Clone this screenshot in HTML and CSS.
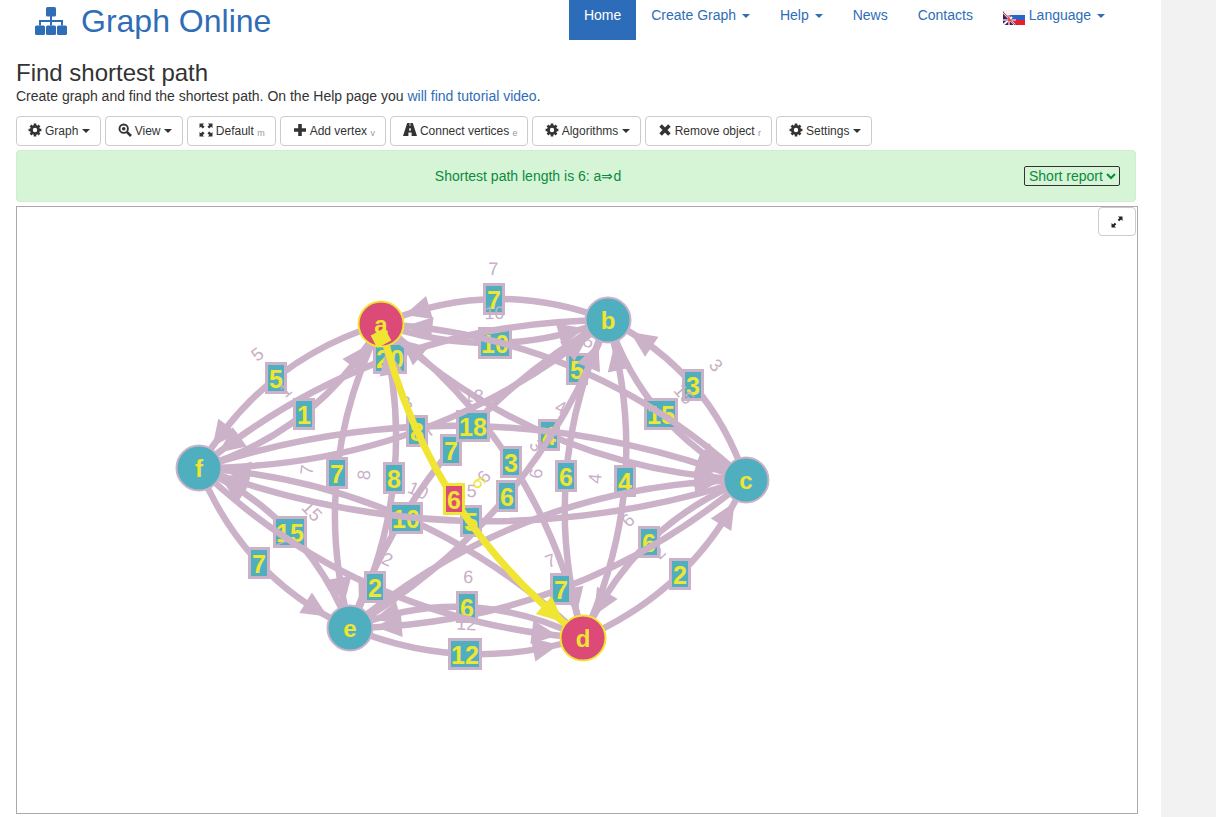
FILE: index.html
```html
<!DOCTYPE html>
<html lang="en">
<head>
<meta charset="utf-8">
<title>Find shortest path - Graph Online</title>
<link rel="stylesheet" href="styles.css">
</head>
<body>
<svg class="defs" width="0" height="0" aria-hidden="true">
  <symbol id="i-cog" viewBox="0 0 14 14">
    <circle cx="7" cy="7" r="3.6" fill="none" stroke="currentColor" stroke-width="2.8"/>
    <path d="M7 .6V3M7 11v2.4M.6 7H3M11 7h2.4M2.5 2.5l1.7 1.7M9.8 9.8l1.7 1.7M11.5 2.5L9.8 4.2M4.2 9.8l-1.7 1.7" stroke="currentColor" stroke-width="2.6" fill="none"/>
  </symbol>
  <symbol id="i-zoom" viewBox="0 0 14 14">
    <circle cx="5.7" cy="5.7" r="4.2" fill="none" stroke="currentColor" stroke-width="1.9"/>
    <circle cx="5.7" cy="5.7" r="1.8" fill="currentColor"/>
    <path d="M8.8 8.8l4.2 4.2" stroke="currentColor" stroke-width="2.6" fill="none"/>
  </symbol>
  <symbol id="i-full" viewBox="0 0 14 14">
    <g fill="currentColor">
      <path d="M.5 .5h4.6L3.7 1.9l1.9 1.9-1.8 1.8-1.9-1.9L.5 5.1z"/>
      <path d="M13.5 .5H8.9l1.4 1.4-1.9 1.9 1.8 1.8 1.9-1.9 1.4 1.4z"/>
      <path d="M.5 13.5h4.6l-1.4-1.4 1.9-1.9-1.8-1.8-1.9 1.9L.5 8.9z"/>
      <path d="M13.5 13.5H8.9l1.4-1.4-1.9-1.9 1.8-1.8 1.9 1.9 1.4-1.4z"/>
    </g>
  </symbol>
  <symbol id="i-plus" viewBox="0 0 14 14">
    <path d="M5.2 1h3.6v4.2H13v3.6H8.8V13H5.2V8.8H1V5.2h4.2z" fill="currentColor"/>
  </symbol>
  <symbol id="i-road" viewBox="0 0 14 14">
    <path d="M4.2 0h2.4v3h.8V0h2.4L14 13H8.6V9.4H5.4V13H0zM6.2 5.2v2.6h1.6V5.2z" fill="currentColor" fill-rule="evenodd"/>
  </symbol>
  <symbol id="i-x" viewBox="0 0 14 14">
    <path d="M2.6 2.6l8.8 8.8M11.4 2.6l-8.8 8.8" stroke="currentColor" stroke-width="3.6" fill="none"/>
  </symbol>
</svg>
<div class="page">
  <header class="navbar">
    <a class="brand" href="#">
      <svg class="brand-icon" viewBox="0 0 32 28" aria-hidden="true">
        <rect x="11" y="0" width="10" height="9.5" rx="1.5"/>
        <rect x="0" y="18.5" width="10" height="9.5" rx="1.5"/>
        <rect x="11" y="18.5" width="10" height="9.5" rx="1.5"/>
        <rect x="22" y="18.5" width="10" height="9.5" rx="1.5"/>
        <path class="brand-lines" d="M16 9v9.5M5 18.5v-4.5h22v4.5"/>
      </svg>
      <span>Graph Online</span>
    </a>
    <nav class="nav">
      <a class="nav-item active" href="#">Home</a>
      <a class="nav-item" href="#">Create Graph <i class="caret"></i></a>
      <a class="nav-item" href="#">Help <i class="caret"></i></a>
      <a class="nav-item" href="#">News</a>
      <a class="nav-item" href="#">Contacts</a>
      <a class="nav-item" href="#"><svg class="flag" viewBox="0 0 22 15" aria-hidden="true">
          <rect width="22" height="5" fill="#f4f4f8"/>
          <rect y="5" width="22" height="5" fill="#2a62c8"/>
          <rect y="10" width="22" height="5" fill="#e8202a"/>
          <path d="M0 1l14 14H0z" fill="#1f2a70"/>
          <path d="M0 2l12 13M0 15l9-8M6 5v10M0 10h13" stroke="#fff" stroke-width="2" fill="none"/>
          <path d="M0 2l12 13M6 5v10M0 10h13" stroke="#d8202c" stroke-width="1" fill="none"/>
        </svg> Language <i class="caret"></i></a>
    </nav>
  </header>

  <main class="content">
    <h1 class="title">Find shortest path</h1>
    <p class="subtitle">Create graph and find the shortest path. On the Help page you <a href="#">will find tutorial video</a>.</p>

    <div class="toolbar">
      <button class="btn tight"><svg class="ico"><use href="#i-cog"/></svg>Graph <i class="caret dark"></i></button>
      <button class="btn"><svg class="ico"><use href="#i-zoom"/></svg>View <i class="caret dark"></i></button>
      <button class="btn tight"><svg class="ico"><use href="#i-full"/></svg>Default <small class="hint">m</small></button>
      <button class="btn"><svg class="ico"><use href="#i-plus"/></svg>Add vertex <small class="hint">v</small></button>
      <button class="btn narrow"><svg class="ico"><use href="#i-road"/></svg>Connect vertices <small class="hint">e</small></button>
      <button class="btn"><svg class="ico"><use href="#i-cog"/></svg>Algorithms <i class="caret dark"></i></button>
      <button class="btn"><svg class="ico"><use href="#i-x"/></svg>Remove object <small class="hint">r</small></button>
      <button class="btn"><svg class="ico"><use href="#i-cog"/></svg>Settings <i class="caret dark"></i></button>
    </div>

    <div class="alert">
      <span class="alert-text">Shortest path length is 6: a⇒d</span>
      <select class="report"><option>Short report</option></select>
    </div>

    <div class="canvas">
      <svg id="graph" class="graph" viewBox="17 207 1120 606" aria-label="Graph"></svg>
      <button class="expand" aria-label="Fullscreen">
        <svg viewBox="0 0 12 12" aria-hidden="true"><path d="M7 .5h4.5V5L10 3.5 8.2 5.3 6.7 3.8 8.5 2zM5 11.5H.5V7L2 8.5l1.8-1.8 1.5 1.5L3.5 10z"/></svg>
      </button>
    </div>
  </main>
</div>
<script src="graph.js"></script>
</body>
</html>
```
FILE: styles.css
```css
* { box-sizing: border-box; }
html, body { margin: 0; height: 100%; overflow: hidden; }
body {
  background: #f2f2f2;
  font-family: "Liberation Sans", Arial, sans-serif;
  font-size: 14px;
  line-height: 20px;
  color: #333;
}
a { color: #2f6db7; text-decoration: none; }
.defs { position: absolute; }
.page { width: 1161px; height: 817px; background: #fff; }

.navbar { display: flex; height: 40px; }
.brand { display: flex; align-items: center; gap: 14px; padding-left: 35px; font-size: 32px; line-height: 40px; color: #2f6db7; height: 42px; }
.brand-icon { width: 32px; height: 28px; fill: #2f6db7; }
.brand-lines { fill: none; stroke: #2f6db7; stroke-width: 2; }
.nav { display: flex; margin-left: auto; margin-right: 41px; }
.nav-item { display: block; height: 40px; padding: 5px 15px 15px; color: #2f6db7; white-space: nowrap; }
.nav-item.active { background: #2d6cb8; color: #fff; }
.flag { width: 22px; height: 15px; vertical-align: -5px; }
.caret { display: inline-block; width: 0; height: 0; margin-left: 2px; vertical-align: middle; border-top: 4px solid currentColor; border-left: 4px solid transparent; border-right: 4px solid transparent; }

.content { padding: 0 25px 0 16px; }
.title { margin: 20px 0 0; font-size: 24px; font-weight: 400; line-height: 26px; color: #333; }
.subtitle { margin: 0; }

.toolbar { display: flex; gap: 4px; margin-top: 10px; }
.btn { display: inline-flex; align-items: center; height: 30px; padding: 0 10px 0 12px; background: #fff; border: 1px solid #ccc; border-radius: 4px; font: 12px/18px "Liberation Sans", Arial, sans-serif; color: #333; white-space: pre; }
.btn.narrow { padding-right: 9px; }
.btn.tight { padding-left: 11px; }
.ico { width: 14px; height: 14px; margin: -2px 3px 0 0; flex: none; color: #333; }
.caret.dark { margin: 0; }
.hint { font-size: 9px; color: #999; padding-top: 5px; line-height: 13px; }

.alert { display: flex; align-items: center; height: 52px; margin-top: 4px; padding: 0 15px; background: #d6f5d6; border: 1px solid #ccefcc; border-radius: 4px; color: #0c8a40; }
.alert-text { flex: 1; text-align: center; }
.report { width: 96px; height: 20px; padding: 0; background: transparent; border: 1px solid #333; border-radius: 2px; color: #0c8a40; font: 14px "Liberation Sans", Arial, sans-serif; }

.canvas { position: relative; width: 1122px; height: 608px; margin-top: 4px; border: 1px solid #aaa; background: #fff; }
.graph { display: block; width: 1120px; height: 606px; }
.expand { position: absolute; top: 0; right: 1px; width: 38px; height: 29px; padding: 0; display: flex; align-items: center; justify-content: center; background: #fff; border: 1px solid #ccc; border-radius: 4px; }
.expand svg { width: 12px; height: 12px; fill: #222; }

.edge { fill: none; stroke: #ccb2c8; stroke-width: 6.5; }
.head { fill: #ccb2c8; }
.edge.hot { stroke: #f0e532; stroke-width: 7; }
.head.hot { fill: #f0e532; }
.weight { font: 18px "Liberation Sans", Arial, sans-serif; fill: #c9aec6; text-anchor: middle; dominant-baseline: central; }
.weight.hot { fill: #f0e532; }
.box { fill: #4fafbf; stroke: #ccb2c8; stroke-width: 3; }
.box.hot { fill: #dc4b77; stroke: #f0e532; }
.num { font: bold 25px "Liberation Sans", Arial, sans-serif; fill: #f0e532; text-anchor: middle; dominant-baseline: central; }
.vertex { fill: #4fafbf; stroke: #ccb2c8; stroke-width: 2; }
.vertex.hot { fill: #dc4b77; stroke: #f0e532; }
.vname { font: bold 24px "Liberation Sans", Arial, sans-serif; fill: #f0e532; text-anchor: middle; dominant-baseline: central; }
```
FILE: graph.js
```js
(function () {
  var V = { a: [381, 324], b: [608, 320], c: [746, 480], d: [583, 638], e: [350, 628], f: [199, 468] };
  var hotV = { a: 1, d: 1 };
  // from, to, label x, label y, text, extra head at "from", hot
  var E = [
    ['e','f',290,532,'15'], ['f','e',259,563,'7'],
    ['b','a',494,299,'7'], ['a','b',495,343,'10'],
    ['b','f',390,358,'20'],
    ['c','b',693,385,'3'], ['b','c',661,414,'15'],
    ['a','c',549,435,'4'], ['c','a',577,369,'5'], ['d','a',511,462,'3'],
    ['e','a',394,478,'8'], ['a','e',337,473,'7'],
    ['a','f',276,378,'5'], ['f','a',304,414,'1'],
    ['d','b',566,476,'6',true], ['d','b',625,481,'4'],
    ['b','e',451,450,'7'], ['e','b',507,496,'6'],
    ['d','c',680,574,'2'], ['c','d',649,542,'6'],
    ['e','c',535,519,''], ['c','e',561,589,'7'],
    ['f','c',473,426,'18'], ['d','f',406,518,'10'], ['c','f',471,521,'5'],
    ['f','b',417,431,'8'],
    ['e','d',465,654,'12'], ['d','e',467,607,'6'], ['f','d',375,587,'2'],
    ['a','d',454,499,'6',false,true]
  ];
  var NS = 'http://www.w3.org/2000/svg';
  var svg = document.getElementById('graph');

  function el(name, attrs, parent, text) {
    var n = document.createElementNS(NS, name);
    for (var k in attrs) n.setAttribute(k, attrs[k]);
    if (text !== undefined) n.textContent = text;
    (parent || svg).appendChild(n);
    return n;
  }
  function pt(p0, c, p1, t) {
    var u = 1 - t;
    return [u*u*p0[0] + 2*u*t*c[0] + t*t*p1[0], u*u*p0[1] + 2*u*t*c[1] + t*t*p1[1]];
  }
  function dist(a, b) { return Math.hypot(a[0]-b[0], a[1]-b[1]); }

  function head(p0, c, p1, cls) {
    // p1 is the vertex the arrow points to
    var t = 1, tip, base;
    while (t > 0 && dist(pt(p0, c, p1, t), p1) < 25) t -= 0.001;
    tip = pt(p0, c, p1, t);
    while (t > 0 && dist(pt(p0, c, p1, t), tip) < 26) t -= 0.001;
    base = pt(p0, c, p1, t);
    var dx = tip[0]-base[0], dy = tip[1]-base[1], l = Math.hypot(dx, dy) || 1;
    var nx = -dy/l*12, ny = dx/l*12;
    el('polygon', { 'class': cls, points: [tip[0],tip[1],base[0]+nx,base[1]+ny,base[0]-nx,base[1]-ny].join(' ') });
  }

  E.forEach(function (e) {
    var p0 = V[e[0]], p1 = V[e[1]], lx = e[2], ly = e[3], label = e[4], hot = e[6];
    var c = [2*lx - (p0[0]+p1[0])/2, 2*ly - (p0[1]+p1[1])/2];
    var suffix = hot ? ' hot' : '';
    el('path', { 'class': 'edge' + suffix, d: 'M' + p0 + 'Q' + c + ' ' + p1 });
    head(p0, c, p1, 'head' + suffix);
    if (e[5]) head(p1, c, p0, 'head');
    if (!label) return;
    var deg = Math.atan2(p1[1]-p0[1], p1[0]-p0[0]) * 180 / Math.PI;
    if (deg > 90) deg -= 180;
    if (deg <= -90) deg += 180;
    var rad = deg * Math.PI / 180;
    var wx = lx + Math.sin(rad) * 30, wy = ly - Math.cos(rad) * 30;
    el('text', { 'class': 'weight' + suffix, transform: 'translate(' + wx + ' ' + wy + ') rotate(' + deg + ')' }, svg, label);
    var w = label.length > 1 ? 34 : 22;
    el('rect', { 'class': 'box' + suffix, x: lx - w/2 + 1.5, y: ly - 16 + 1.5, width: w - 3, height: 29 });
    el('text', { 'class': 'num', x: lx, y: ly + 1 }, svg, label);
  });

  Object.keys(V).forEach(function (k) {
    el('circle', { 'class': 'vertex' + (hotV[k] ? ' hot' : ''), cx: V[k][0], cy: V[k][1], r: 22.5 });
    el('text', { 'class': 'vname', x: V[k][0], y: V[k][1] }, svg, k);
  });
  // the highlighted edge's start marker sits over its vertex
  el('rect', { 'class': 'head hot', x: -8, y: -7, width: 16, height: 14, transform: 'translate(' + V.a[0] + ' ' + (V.a[1] + 14) + ') rotate(-28)' });
})();
```
